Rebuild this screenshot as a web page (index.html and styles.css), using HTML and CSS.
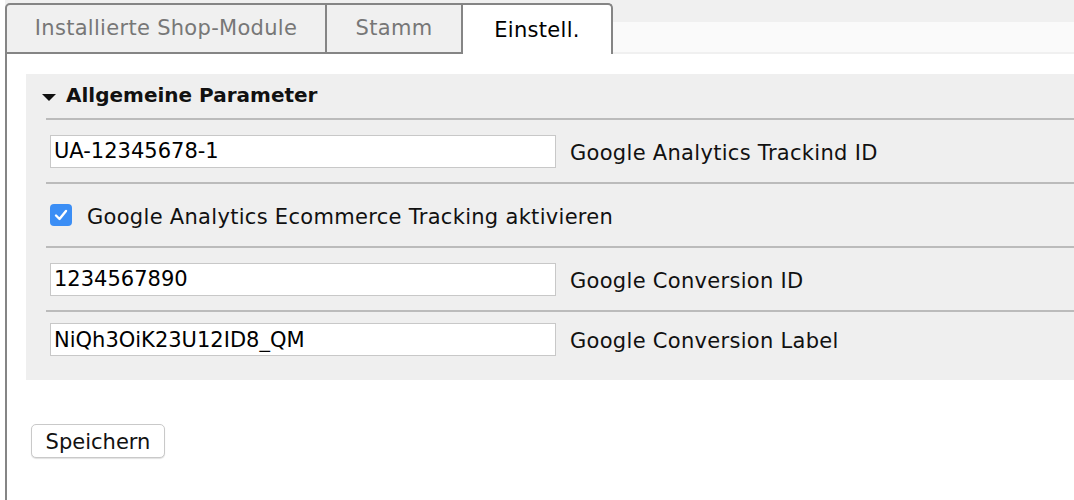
FILE: index.html
```html
<!DOCTYPE html>
<html lang="de">
<head>
<meta charset="utf-8">
<title>Einstellungen</title>
<link rel="stylesheet" href="styles.css">
</head>
<body>
<div class="tabbar">
  <div class="tab">Installierte Shop-Module</div>
  <div class="tab tab-mid">Stamm</div>
  <div class="tab tab-active">Einstell.</div>
</div>
<div class="content">
  <div class="panel">
    <div class="panel-head">
      <span class="caret"></span>
      <span class="panel-title">Allgemeine Parameter</span>
    </div>
    <div class="rows">
      <div class="row">
        <input class="field" type="text" value="UA-12345678-1">
        <span class="label">Google Analytics Trackind ID</span>
      </div>
      <div class="row">
        <span class="check"><svg width="14" height="12" viewBox="0 0 14 12"><path d="M2 6.5 L5.5 10 L12 2" fill="none" stroke="#fff" stroke-width="2.4" stroke-linecap="round" stroke-linejoin="round"/></svg></span>
        <span class="label check-label">Google Analytics Ecommerce Tracking aktivieren</span>
      </div>
      <div class="row">
        <input class="field" type="text" value="1234567890">
        <span class="label">Google Conversion ID</span>
      </div>
      <div class="row row-last">
        <input class="field" type="text" value="NiQh3OiK23U12ID8_QM">
        <span class="label">Google Conversion Label</span>
      </div>
    </div>
  </div>
  <div class="actions">
    <button class="btn" type="button">Speichern</button>
  </div>
</div>
</body>
</html>
```
FILE: styles.css
```css
html, body {
  margin: 0;
  padding: 0;
  background: #fff;
}
body {
  font-family: "DejaVu Sans", "Open Sans", sans-serif;
  font-size: 21px;
  color: #111;
  width: 1074px;
  height: 500px;
  overflow: hidden;
}
.tabbar {
  display: flex;
  align-items: flex-end;
  height: 54px;
  padding-left: 5px;
  box-sizing: border-box;
  background: linear-gradient(#f0f0f0 0, #f0f0f0 22px, #fafafa 22px, #fafafa 52px, #f0f0f0 52px);
  background-position: 5px 0;
  background-repeat: no-repeat;
}
.tab {
  height: 51px;
  box-sizing: border-box;
  border: 2px solid #858585;
  background: #f0f0f0;
  color: #777;
  display: flex;
  align-items: center;
  justify-content: center;
  width: 322px;
  border-top-left-radius: 5px;
  padding-bottom: 2px;
  letter-spacing: 0.3px;
}
.tab-mid {
  width: 136px;
  border-left: none;
  border-radius: 0;
}
.tab-active {
  width: 150px;
  border-left: none;
  border-bottom: none;
  border-radius: 0 5px 0 0;
  background: #fff;
  color: #000;
  padding-bottom: 0;
}
.content {
  border-left: 2px solid #858585;
  margin-left: 5px;
  height: 446px;
  padding: 20px 0 0 19px;
  box-sizing: border-box;
}
.panel {
  background: #efefef;
  padding-bottom: 24px;
}
.panel-head {
  display: flex;
  align-items: center;
  height: 44px;
  padding-left: 16px;
}
.caret {
  width: 0;
  height: 0;
  border-left: 7px solid transparent;
  border-right: 7px solid transparent;
  border-top: 7px solid #111;
  margin-right: 10px;
  margin-top: 3px;
}
.panel-title {
  font-size: 20px;
  font-weight: bold;
  color: #111;
  margin-top: -2px;
}
.rows {
  margin-left: 20px;
}
.row {
  display: flex;
  align-items: center;
  height: 62px;
  border-top: 2px solid #bbb;
  padding-left: 4px;
}
.row-last {
  height: 33px;
  align-items: flex-start;
  padding-top: 11px;
}
.field {
  width: 506px;
  height: 33px;
  box-sizing: border-box;
  border: 1px solid #c8c8c8;
  background: #fff;
  font-family: inherit;
  font-size: 21px;
  color: #000;
  padding: 0 3px;
  margin: 0 14px 0 0;
}
.label {
  color: #111;
  letter-spacing: 0.3px;
  margin-top: 3px;
}
.row-last .label {
  margin-top: 6px;
}
.check {
  width: 22px;
  height: 22px;
  border-radius: 4px;
  background: #3b8ef5;
  display: flex;
  align-items: center;
  justify-content: center;
  margin: 0 15px 0 0;
  flex: none;
}
.actions {
  padding-top: 44px;
  padding-left: 5px;
}
.btn {
  font-family: inherit;
  font-size: 21px;
  color: #111;
  background: #fff;
  border: 1px solid #c9c9c9;
  border-radius: 5px;
  box-shadow: 0 1px 1px rgba(0,0,0,0.12);
  width: 134px;
  height: 34px;
  padding: 2px 0 0;
}
```
